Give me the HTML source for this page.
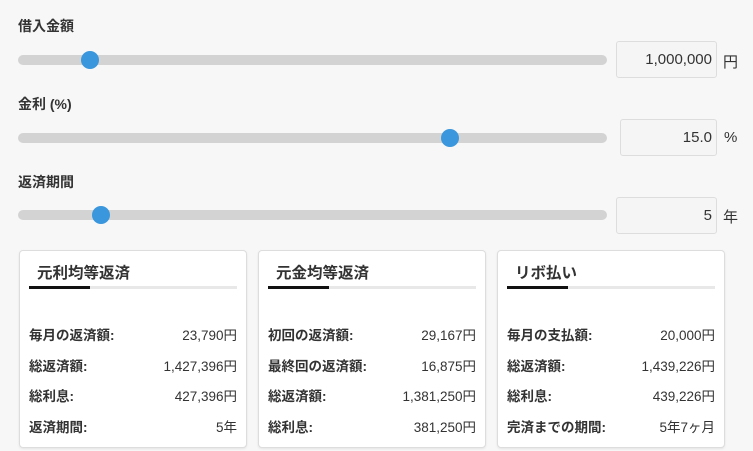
<!DOCTYPE html>
<html><head><meta charset="utf-8"><style>
*{margin:0;padding:0;box-sizing:border-box}
body{width:753px;height:451px;background:#f7f7f7;font-family:"Liberation Sans","Noto Sans CJK JP",sans-serif;color:#333;position:relative;overflow:hidden}
.a{position:absolute}
.lbl{font-size:14px;font-weight:bold;color:#333;left:18px}
.track{left:18px;width:589px;height:10px;border-radius:5px;background:#d3d3d3}
.thumb{width:18px;height:18px;border-radius:50%;background:#3a97dd}
.inp{background:#f5f5f5;border:1px solid #ddd;border-radius:3px;font-size:15px;text-align:right;padding-right:4px;color:#333}
.unit{font-size:15px;color:#333}
.card{background:#fff;border:1px solid #ddd;border-radius:4px;width:228px;height:198px;top:250px;box-shadow:0 1px 2px rgba(0,0,0,.08)}
.ttl{position:absolute;left:17px;top:10px;font-size:15.5px;font-weight:bold;color:#333}
.tab{position:absolute;left:9px;top:35px;width:208px;height:3px;background:#e8e8e8}
.tab i{display:block;width:61px;height:3px;background:#111}
.row{position:absolute;left:9px;width:208px;font-size:13.5px;display:flex;justify-content:space-between}
.row b{font-weight:bold}
</style></head><body>
<div class="a lbl" style="top:16px">借入金額</div>
<div class="a track" style="top:55px"></div>
<div class="a thumb" style="left:81px;top:51px"></div>
<div class="a inp" style="left:616px;top:41px;width:101px;height:37px;line-height:35px">1,000,000</div>
<div class="a unit" style="left:723px;top:51px">円</div>

<div class="a lbl" style="top:94px">金利 (%)</div>
<div class="a track" style="top:133px"></div>
<div class="a thumb" style="left:441px;top:129px"></div>
<div class="a inp" style="left:620px;top:119px;width:97px;height:37px;line-height:35px">15.0</div>
<div class="a unit" style="left:724px;top:129px">%</div>

<div class="a lbl" style="top:172px">返済期間</div>
<div class="a track" style="top:210px"></div>
<div class="a thumb" style="left:92px;top:206px"></div>
<div class="a inp" style="left:616px;top:197px;width:101px;height:37px;line-height:35px">5</div>
<div class="a unit" style="left:723px;top:206px">年</div>

<div class="a card" style="left:19px">
<div class="ttl">元利均等返済</div><div class="tab"><i></i></div>
<div class="row" style="top:73px"><b>毎月の返済額:</b><span>23,790円</span></div>
<div class="row" style="top:104px"><b>総返済額:</b><span>1,427,396円</span></div>
<div class="row" style="top:134px"><b>総利息:</b><span>427,396円</span></div>
<div class="row" style="top:165px"><b>返済期間:</b><span>5年</span></div>
</div>
<div class="a card" style="left:258px">
<div class="ttl">元金均等返済</div><div class="tab"><i></i></div>
<div class="row" style="top:73px"><b>初回の返済額:</b><span>29,167円</span></div>
<div class="row" style="top:104px"><b>最終回の返済額:</b><span>16,875円</span></div>
<div class="row" style="top:134px"><b>総返済額:</b><span>1,381,250円</span></div>
<div class="row" style="top:165px"><b>総利息:</b><span>381,250円</span></div>
</div>
<div class="a card" style="left:497px">
<div class="ttl">リボ払い</div><div class="tab"><i></i></div>
<div class="row" style="top:73px"><b>毎月の支払額:</b><span>20,000円</span></div>
<div class="row" style="top:104px"><b>総返済額:</b><span>1,439,226円</span></div>
<div class="row" style="top:134px"><b>総利息:</b><span>439,226円</span></div>
<div class="row" style="top:165px"><b>完済までの期間:</b><span>5年7ヶ月</span></div>
</div>
</body></html>
